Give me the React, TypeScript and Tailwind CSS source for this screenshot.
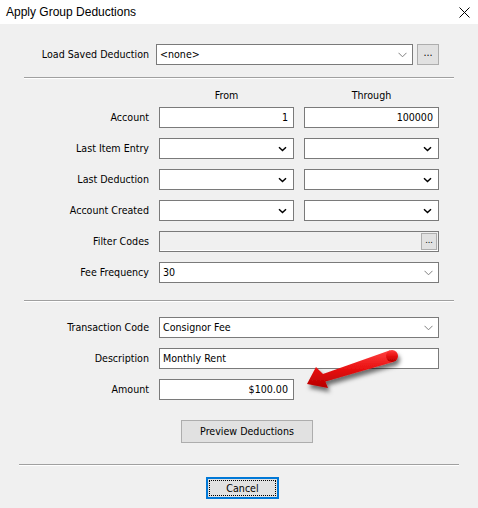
import React from "react";

const ui = "font-['Tahoma','DejaVu_Sans_Condensed','DejaVu_Sans',sans-serif] text-[10.6px] leading-[13px] text-black";

const Chevron = ({ dark }: { dark?: boolean }) => (
  <svg width="9" height="6" viewBox="0 0 9 6" className="shrink-0">
    {dark ? (
      <path d="M1 1.2 L4.5 4.5 L8 1.2" fill="none" stroke="#000" strokeWidth="1.5" />
    ) : (
      <path d="M0.5 0.8 L4.5 4.8 L8.5 0.8" fill="none" stroke="#808080" strokeWidth="1" />
    )}
  </svg>
);

const Combo = ({ value, dark, className = "" }: { value?: string; dark?: boolean; className?: string }) => (
  <div
    className={`h-[21px] bg-white border border-[#7a7a7a] flex items-center justify-between pl-[3px] ${
      dark ? "pr-[6px]" : "pr-[5px]"
    } ${className}`}
  >
    <span>{value}</span>
    <Chevron dark={dark} />
  </div>
);

const TextBox = ({ value, right, className = "" }: { value?: string; right?: boolean; className?: string }) => (
  <div
    className={`h-[21px] bg-white border border-[#7a7a7a] flex items-center px-[3px] ${
      right ? "justify-end pr-[5px]" : ""
    } ${className}`}
  >
    {value}
  </div>
);

const Label = ({ children }: { children: React.ReactNode }) => (
  <div className="h-[21px] flex items-center justify-end">{children}</div>
);

const Separator = ({ className = "" }: { className?: string }) => (
  <div className={`h-[2px] border-t border-[#a0a0a0] border-b border-b-white ${className}`} />
);

export default function App() {
  return (
    <div className={`w-[478px] h-[508px] bg-[#f0f0f0] relative ${ui}`}>
      {/* title bar */}
      <div className="h-[24px] bg-white flex items-center justify-between pl-[6px] pr-[8px]">
        <span className="font-['Liberation_Sans',sans-serif] text-[12px] text-black">Apply Group Deductions</span>
        <svg width="11" height="11" viewBox="0 0 11 11">
          <path d="M0.5 0.5 L10.5 10.5 M10.5 0.5 L0.5 10.5" stroke="#000" strokeWidth="1" />
        </svg>
      </div>

      {/* saved deduction picker */}
      <div className="mt-[20px] flex items-center">
        <div className="w-[149px] text-right">Load Saved Deduction</div>
        <Combo value="<none>" className="ml-[7px] w-[257px]" />
        <button className="ml-[4px] w-[22px] h-[21px] bg-[#e1e1e1] border border-[#adadad] flex items-center justify-center pb-[4px]">
          ...
        </button>
      </div>

      <Separator className="mt-[12px] ml-[24px] w-[430px]" />

      {/* range filters */}
      <div className="mt-[10px] pl-[24px] grid grid-cols-[125px_135px_135px] gap-x-[10px] gap-y-[10px]">
        <div />
        <div className="text-center -mb-[5px]">From</div>
        <div className="text-center -mb-[5px]">Through</div>

        <Label>Account</Label>
        <TextBox value="1" right />
        <TextBox value="100000" right />

        <Label>Last Item Entry</Label>
        <Combo dark />
        <Combo dark />

        <Label>Last Deduction</Label>
        <Combo dark />
        <Combo dark />

        <Label>Account Created</Label>
        <Combo dark />
        <Combo dark />

        <Label>Filter Codes</Label>
        <div className="col-span-2 h-[21px] bg-[#f0f0f0] border border-[#7a7a7a] flex items-center justify-end pr-[1px] shadow-[inset_0_-1px_0_#fff]">
          <div className="w-[16px] h-[17px] bg-[#e1e1e1] border border-[#adadad] flex items-center justify-center text-[9px] leading-none pb-[3px]">
            ...
          </div>
        </div>

        <Label>Fee Frequency</Label>
        <Combo value="30" className="col-span-2" />
      </div>

      <Separator className="mt-[17px] ml-[24px] w-[430px]" />

      {/* deduction details */}
      <div className="mt-[15px] pl-[24px] grid grid-cols-[125px_135px_135px] gap-x-[10px] gap-y-[10px]">
        <Label>Transaction Code</Label>
        <Combo value="Consignor Fee" className="col-span-2" />

        <Label>Description</Label>
        <TextBox value="Monthly Rent" className="col-span-2" />

        <Label>Amount</Label>
        <TextBox value="$100.00" right />
        <div />
      </div>

      <div className="mt-[20px] pl-[181px]">
        <button className="w-[132px] h-[23px] bg-[#e1e1e1] border border-[#adadad] flex items-center justify-center">
          Preview Deductions
        </button>
      </div>

      <Separator className="mt-[21px] ml-[19px] w-[440px]" />

      <div className="mt-[11px] pl-[206px]">
        <button className="w-[73px] h-[22px] bg-[#e1e1e1] border-2 border-[#0078d7] p-[1px]">
          <div className="w-full h-full border border-dotted border-black flex items-center justify-center">Cancel</div>
        </button>
      </div>

      {/* callout arrow */}
      <svg
        className="absolute left-[296px] top-[340px] pointer-events-none"
        width="115"
        height="60"
        viewBox="296 340 115 60"
      >
        <defs>
          <linearGradient id="arrowFill" x1="0" y1="0" x2="0" y2="1">
            <stop offset="0" stopColor="#ff4040" />
            <stop offset="0.5" stopColor="#e81010" />
            <stop offset="1" stopColor="#b50000" />
          </linearGradient>
          <filter id="arrowShadow" x="-20%" y="-40%" width="150%" height="200%">
            <feDropShadow dx="2" dy="4" stdDeviation="2" floodColor="#000" floodOpacity="0.55" />
          </filter>
        </defs>
        <g filter="url(#arrowShadow)" fill="url(#arrowFill)">
          <polygon points="390.1,350.3 323,373.9 316,367 307,384 328,388 325.4,381.5 393.9,361.7" />
          <circle cx="392" cy="356" r="6" />
        </g>
      </svg>
    </div>
  );
}
